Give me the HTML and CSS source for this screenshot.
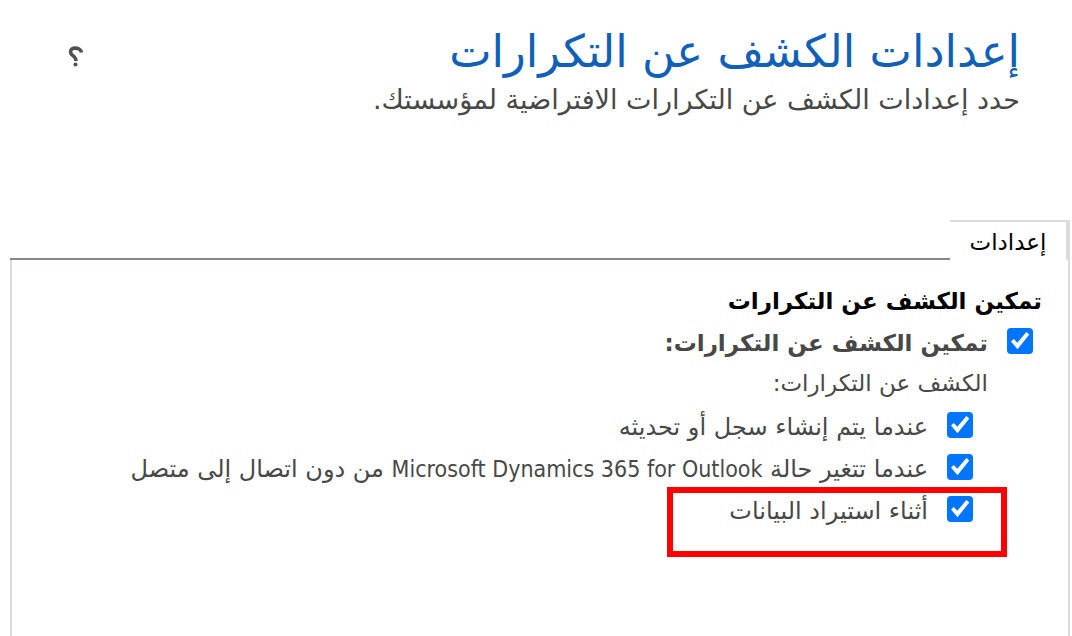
FILE: index.html
```html
<!DOCTYPE html>
<html lang="ar" dir="rtl">
<head>
<meta charset="utf-8">
<meta name="viewport" content="width=device-width, initial-scale=1">
<title>إعدادات الكشف عن التكرارات</title>
<link rel="stylesheet" href="styles.css">
</head>
<body>
<header class="header">
  <div>
    <h1 class="title">إعدادات الكشف عن التكرارات</h1>
    <p class="subtitle">حدد إعدادات الكشف عن التكرارات الافتراضية لمؤسستك.</p>
  </div>
  <button class="help" type="button" aria-label="تعليمات">
    <svg class="help-icon" viewBox="0 0 24 24" aria-hidden="true">
      <path d="M17.500 8.500C17 3.500 6.500 2 6.500 8C6.500 12 12 11.500 12 17" fill="none" stroke="#505050" stroke-width="3.600"/>
      <circle cx="11.500" cy="20.500" r="2" fill="#505050"/>
    </svg>
  </button>
</header>
<main class="main">
  <nav class="tabs">
    <button class="tab" type="button">إعدادات</button>
  </nav>
  <section class="panel">
    <h2 class="section-title">تمكين الكشف عن التكرارات</h2>
    <label class="check check-main"><input class="box" type="checkbox" checked><span class="check-text">تمكين الكشف عن التكرارات:</span></label>
    <p class="group-label">الكشف عن التكرارات:</p>
    <div class="options">
      <label class="check"><input class="box" type="checkbox" checked><span class="check-text">عندما يتم إنشاء سجل أو تحديثه</span></label>
      <label class="check"><input class="box" type="checkbox" checked><span class="check-text">عندما تتغير حالة <bdi class="latin">Microsoft Dynamics 365 for Outlook</bdi> من دون اتصال إلى متصل</span></label>
      <div class="highlighted">
        <label class="check"><input class="box" type="checkbox" checked><span class="check-text">أثناء استيراد البيانات</span></label>
      </div>
    </div>
  </section>
</main>
</body>
</html>
```
FILE: styles.css
```css
*,
*::before,
*::after {
  box-sizing: border-box;
}

body {
  margin: 0;
  min-height: 100vh;
  display: flex;
  flex-direction: column;
  background: #fff;
  color: #484848;
  font-family: "DejaVu Sans", sans-serif;
  font-size: 24px;
}

h1, h2, p {
  margin: 0;
  font-weight: 400;
}

.header {
  display: flex;
  justify-content: space-between;
  align-items: flex-start;
  min-height: 220px;
  padding: 22px 52px 0 64px;
}

.title {
  color: #1160b7;
  font-size: 45px;
  line-height: 60px;
}

.subtitle {
  font-size: 27px;
  line-height: 36px;
}

.help {
  display: flex;
  margin-top: 22px;
  padding: 0;
  border: 0;
  background: none;
}

.help-icon {
  width: 24px;
  height: 24px;
}

.main {
  flex: 1;
  display: flex;
  flex-direction: column;
  padding: 0 2px 0 10px;
}

.tabs {
  display: flex;
  height: 40px;
}

.tabs::after {
  content: "";
  flex: 1;
  border-bottom: 2px solid #85878f;
}

.tab {
  width: 120px;
  padding: 2px 0 0;
  border: 0;
  border-top: 2px solid #dcdcdc;
  border-right: 4px solid #dcdcdc;
  background: #fff;
  color: #000;
  font: 23px/36px "DejaVu Sans", sans-serif;
}

.panel {
  flex: 1;
  padding: 22px 26px 0 0;
  border: solid #dcdcdc;
  border-width: 0 2px;
}

.section-title {
  color: #000;
  font-size: 23px;
  font-weight: 700;
  line-height: 38px;
}

.check {
  display: flex;
  align-items: center;
  gap: 19px;
  height: 42px;
  white-space: nowrap;
}

.check-text {
  padding-top: 4px;
  line-height: 38px;
}

.check-main {
  padding-right: 9px;
  font-size: 23px;
  font-weight: 700;
}

.box {
  appearance: none;
  flex: none;
  width: 26px;
  height: 26px;
  margin: 0;
  border-radius: 4px;
  background: #0075ff;
}

.box:checked {
  background-image: url("data:image/svg+xml,%3Csvg xmlns='http://www.w3.org/2000/svg' viewBox='0 0 26 26'%3E%3Cpath d='M4 13.500L6.800 11L10.300 14.800L19.400 4L22.300 6.400L10.500 21.200Z' fill='white'/%3E%3C/svg%3E");
}

.group-label {
  padding-right: 54px;
  font-size: 23px;
  line-height: 42px;
}

.options {
  padding-right: 69px;
}

.latin {
  font-family: "DejaVu Sans Condensed", "DejaVu Sans", sans-serif;
  font-size: 23px;
}

.highlighted {
  position: relative;
}

.highlighted::after {
  content: "";
  position: absolute;
  top: -1px;
  right: -34px;
  width: 340px;
  height: 70px;
  border: 6px solid #f00;
  pointer-events: none;
}
```
